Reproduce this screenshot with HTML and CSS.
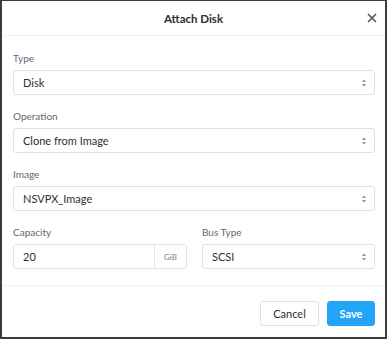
FILE: index.html
```html
<!DOCTYPE html>
<html lang="en">
<head>
    <meta charset="UTF-8">
    <title>Attach Disk</title>
    <link rel="stylesheet" href="styles.css">
</head>
<body>

    <div class="modal">
        <div class="modal-header">
            <h1>Attach Disk</h1>
            <span class="close">
                <svg width="10" height="10" viewBox="0 0 10 10"><path d="M1 1L9 9M9 1L1 9" stroke="#4d5560" stroke-width="1.6" fill="none"/></svg>
            </span>
        </div>

        <div class="modal-body">
            <div class="field">
                <label>Type</label>
                <div class="control select">
                    <span>Disk</span>
                    <svg class="arrows" width="6" height="8" viewBox="0 0 6 8"><path d="M3 0.5L5 3H1Z M3 7.5L5 5H1Z" fill="#8a9099"/></svg>
                </div>
            </div>

            <div class="field">
                <label>Operation</label>
                <div class="control select">
                    <span>Clone from Image</span>
                    <svg class="arrows" width="6" height="8" viewBox="0 0 6 8"><path d="M3 0.5L5 3H1Z M3 7.5L5 5H1Z" fill="#8a9099"/></svg>
                </div>
            </div>

            <div class="field">
                <label>Image</label>
                <div class="control select">
                    <span>NSVPX_Image</span>
                    <svg class="arrows" width="6" height="8" viewBox="0 0 6 8"><path d="M3 0.5L5 3H1Z M3 7.5L5 5H1Z" fill="#8a9099"/></svg>
                </div>
            </div>

            <div class="row">
                <div class="field">
                    <label>Capacity</label>
                    <div class="control input-group">
                        <span class="value">20</span>
                        <span class="addon">GiB</span>
                    </div>
                </div>
                <div class="field">
                    <label>Bus Type</label>
                    <div class="control select">
                        <span>SCSI</span>
                        <svg class="arrows" width="6" height="8" viewBox="0 0 6 8"><path d="M3 0.5L5 3H1Z M3 7.5L5 5H1Z" fill="#8a9099"/></svg>
                    </div>
                </div>
            </div>
        </div>

        <div class="modal-footer">
            <button class="btn">Cancel</button>
            <button class="btn primary">Save</button>
        </div>
    </div>

</body>
</html>
```

FILE: styles.css
```css
body {
    margin: 0;
    padding: 0;
    font-family: 'Lato', 'Open Sans', sans-serif;
    color: #333;
    background: #fff;
}

.modal {
    width: 387px;
    height: 339px;
    box-sizing: border-box;
    border: 1px solid #3c3c3c;
    border-left-width: 2px;
    border-right-width: 2px;
    border-bottom-width: 2px;
    background: #fff;
    display: flex;
    flex-direction: column;
}

.modal-header {
    height: 34px;
    display: flex;
    align-items: center;
    justify-content: center;
    position: relative;
    border-bottom: 1px solid #eef0f2;
}

.modal-header h1 {
    margin: 0;
    font-size: 11.5px;
    font-weight: 700;
    color: #2b2f33;
}

.close {
    position: absolute;
    right: 8px;
    top: 12px;
    display: flex;
}

.modal-body {
    padding: 15px 10px 16px 11px;
    display: flex;
    flex-direction: column;
    gap: 14px;
    border-bottom: 1px solid #eef0f2;
}

.field label {
    display: block;
    font-size: 10px;
    line-height: 14px;
    color: #5f6773;
    margin-bottom: 5px;
}

.control {
    height: 25px;
    box-sizing: border-box;
    border: 1px solid #dde1e6;
    border-radius: 3px;
    display: flex;
    align-items: center;
    font-size: 11px;
    color: #2b2f33;
}

.select {
    padding: 0 7px 0 9px;
    justify-content: space-between;
}

.row {
    display: grid;
    grid-template-columns: 174px 173px;
    gap: 15px;
}

.input-group .value {
    flex: 1;
    padding-left: 9px;
}

.input-group .addon {
    width: 31px;
    height: 100%;
    border-left: 1px solid #e3e6ea;
    display: flex;
    align-items: center;
    justify-content: center;
    font-size: 8px;
    color: #7a818b;
}

.modal-footer {
    display: flex;
    justify-content: flex-end;
    gap: 8px;
    padding: 15px 10px 0;
}

.btn {
    height: 25px;
    width: 59px;
    border: 1px solid #dde1e6;
    border-radius: 3px;
    background: #fff;
    font-family: inherit;
    font-size: 11px;
    color: #2b2f33;
}

.btn.primary {
    width: 48px;
    background: #22a5f7;
    border-color: #22a5f7;
    color: #fff;
    font-weight: 700;
}
```
